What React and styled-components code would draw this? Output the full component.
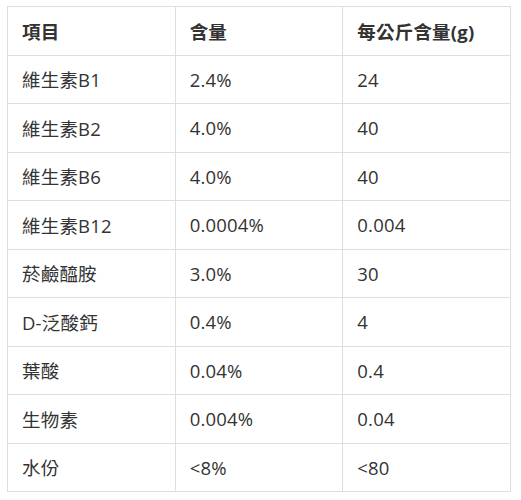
import React from "react";
import styled, { createGlobalStyle } from "styled-components";

const Global = createGlobalStyle`
  html, body { margin: 0; padding: 0; background: #fff; }
  body { font-family: "Open Sans", "Noto Sans CJK TC", sans-serif; color: #333; }
`;

const Wrap = styled.div`
  padding: 6px 10px 0 7px;
`;

const Table = styled.table`
  width: 504px;
  border-collapse: collapse;
  table-layout: fixed;
  font-size: 18.5px;
`;

const Cell = styled.td`
  border: 1px solid #dedede;
  height: 48.5px;
  padding: 0 14px;
  box-sizing: border-box;
  vertical-align: middle;
  font-weight: ${(p) => (p.$head ? 700 : 400)};
  color: #333;
  white-space: nowrap;
  letter-spacing: 0.2px;
`;

const rows = [
  ["維生素B1", "2.4%", "24"],
  ["維生素B2", "4.0%", "40"],
  ["維生素B6", "4.0%", "40"],
  ["維生素B12", "0.0004%", "0.004"],
  ["菸鹼醯胺", "3.0%", "30"],
  ["D-泛酸鈣", "0.4%", "4"],
  ["葉酸", "0.04%", "0.4"],
  ["生物素", "0.004%", "0.04"],
  ["水份", "<8%", "<80"],
];

export default function App() {
  return (
    <>
      <Global />
      <Wrap>
        <Table>
          <tbody>
            <tr>
              <Cell $head>項目</Cell>
              <Cell $head>含量</Cell>
              <Cell $head>每公斤含量(g)</Cell>
            </tr>
            {rows.map((r) => (
              <tr key={r[0]}>
                {r.map((c, i) => (
                  <Cell key={i}>{c}</Cell>
                ))}
              </tr>
            ))}
          </tbody>
        </Table>
      </Wrap>
    </>
  );
}
